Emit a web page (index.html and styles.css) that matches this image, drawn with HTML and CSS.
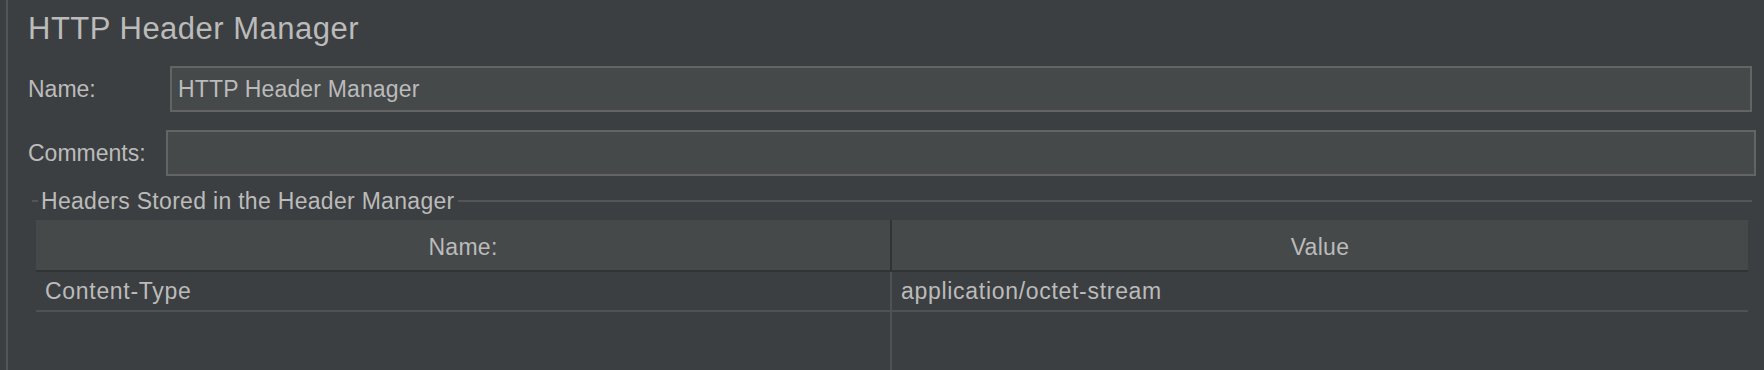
FILE: index.html
```html
<!DOCTYPE html>
<html lang="en">
<head>
    <meta charset="UTF-8">
    <title>HTTP Header Manager</title>
    <link rel="stylesheet" href="styles.css">
</head>
<body>
<div class="panel">
    <h1 class="title">HTTP Header Manager</h1>

    <div class="field-row field-row-name">
        <label class="field-label label-name">Name:</label>
        <div class="text-field">HTTP Header Manager</div>
    </div>

    <div class="field-row">
        <label class="field-label label-comments">Comments:</label>
        <div class="text-field"></div>
    </div>

    <div class="group">
        <div class="group-head"><span>Headers Stored in the Header Manager</span></div>

        <div class="grid">
            <div class="grid-head">
                <div class="cell">Name:</div>
                <div class="cell">Value</div>
            </div>
            <div class="grid-row">
                <div class="cell">Content-Type</div>
                <div class="cell">application/octet-stream</div>
            </div>
            <div class="grid-row filler">
                <div class="cell"></div>
                <div class="cell"></div>
            </div>
        </div>
    </div>
</div>
</body>
</html>
```

FILE: styles.css
```css
html, body {
    margin: 0;
    padding: 0;
    height: 370px;
    overflow: hidden;
}
body {
    background-color: #3c3f41;
    color: #bbbbbb;
    font-family: 'Liberation Sans', Arial, sans-serif;
    font-size: 23px;
}
.panel {
    margin-left: 6px;
    border-left: 2px solid #555555;
    padding: 11px 8px 0 20px;
    height: 370px;
    box-sizing: border-box;
}
.title {
    margin: 0;
    font-size: 31px;
    font-weight: normal;
    line-height: 36px;
    letter-spacing: 0.5px;
}

/* name / comments rows */
.field-row {
    display: flex;
    align-items: center;
    margin-top: 18px;
}
.field-row-name {
    margin-top: 19px;
    margin-right: 4px;
}
.field-label {
    flex: none;
    line-height: 26px;
}
.label-name {
    width: 142px;
}
.label-comments {
    width: 138px;
}
.text-field {
    flex: 1;
    height: 46px;
    box-sizing: border-box;
    border: 2px solid #646464;
    background-color: #45494a;
    padding-left: 6px;
    line-height: 42px;
    letter-spacing: 0.15px;
    white-space: nowrap;
}

/* titled group */
.group {
    margin: 12px 4px 0 4px;
}
.group-head {
    display: flex;
    align-items: center;
    height: 26px;
    line-height: 26px;
    letter-spacing: 0.3px;
}
.group-head::before,
.group-head::after {
    content: "";
    height: 2px;
    background-color: #555555;
}
.group-head::before {
    width: 6px;
}
.group-head::after {
    flex: 1;
}
.group-head span {
    padding: 0 3px 0 3px;
}

/* table */
.grid {
    margin: 6px 4px 0 4px;
}
.grid-head,
.grid-row {
    display: grid;
    grid-template-columns: 856px 1fr;
}
.grid-head {
    background-color: #45494a;
    border-bottom: 2px solid #313335;
    height: 50px;
}
.grid-head .cell {
    text-align: center;
    padding-top: 4px;
    line-height: 46px;
    letter-spacing: 0.3px;
}
.grid-head .cell:first-child {
    border-right: 2px solid #313335;
}
.grid-row {
    height: 40px;
    box-sizing: border-box;
    border-bottom: 2px solid #4f5254;
}
.grid-row .cell {
    padding-left: 9px;
    line-height: 38px;
    letter-spacing: 0.7px;
    white-space: nowrap;
}
.grid-row .cell:first-child {
    border-right: 2px solid #4f5254;
}
.grid-row.filler {
    height: 70px;
    border-bottom: none;
}
```
